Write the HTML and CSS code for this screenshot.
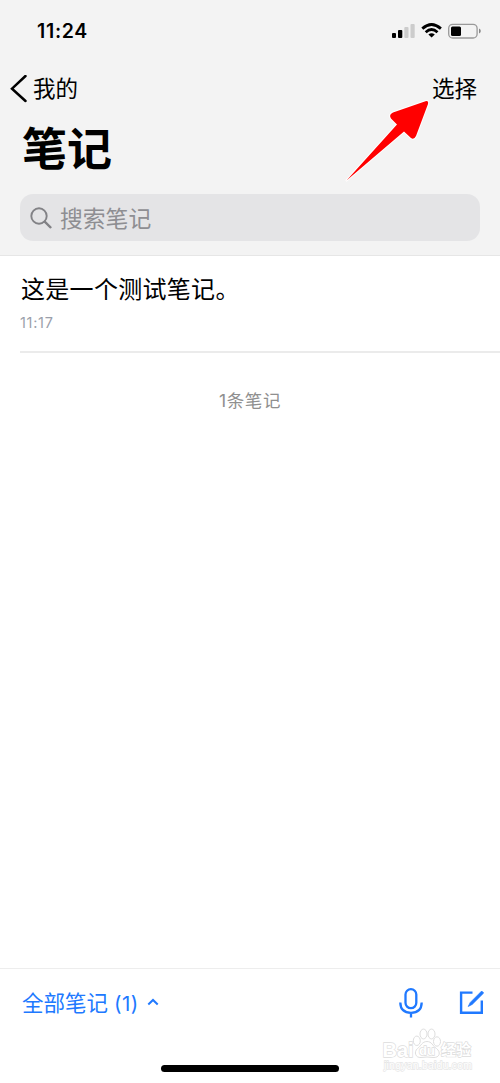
FILE: index.html
```html
<!DOCTYPE html>
<html lang="zh-CN">
<head>
<meta charset="utf-8">
<title>笔记</title>
<link rel="stylesheet" href="styles.css">
</head>
<body>
<div class="screen">
  <header class="header">
    <div class="status">
      <span class="clock">11:24</span>
      <svg class="status-icons" width="90" height="18" viewBox="0 0 90 18">
        <rect x="1" y="11" width="4" height="5" rx="1"/>
        <rect x="7" y="8" width="4.3" height="8" rx="1"/>
        <rect x="13.3" y="5" width="4.2" height="11" rx="1" fill="#ccc"/>
        <rect x="19.5" y="2" width="4.2" height="14" rx="1" fill="#ccc"/>
        <g fill="none" stroke="#000" stroke-width="2.8">
          <path d="M31.3 6.6Q40.500 -1.600 49.900 6.600"/>
          <path d="M34.700 10.200Q40.500 4.800 46.500 10.200"/>
        </g>
        <path d="M37.400 12.400Q40.600 9.900 43.800 12.400L40.600 15.600Z"/>
        <rect x="57.700" y="2.300" width="28.400" height="13.700" rx="4" fill="none" stroke="#999" stroke-width="1.300"/>
        <rect x="60" y="4.500" width="10" height="9.500" rx="1.500"/>
        <path d="M88 6.500Q89.800 7.200 89.800 9T88 11.500Z" fill="#888"/>
      </svg>
    </div>
    <nav class="nav">
      <span class="back">
        <svg width="17" height="28" viewBox="0 0 17 28"><path d="M15.500 1L2 13.700L15.500 26" fill="none" stroke="#000" stroke-width="2.500" stroke-linecap="round"/></svg>
        <span>我的</span>
      </span>
      <span class="select">选择</span>
    </nav>
    <h1 class="title">笔记</h1>
    <div class="search">
      <svg width="22" height="22" viewBox="0 0 22 22"><g fill="none" stroke="#828286" stroke-width="1.900" stroke-linecap="round"><circle cx="9" cy="9" r="7.700"/><path d="M14.700 14.700L20.500 20.300" stroke-width="2.300"/></g></svg>
      <span>搜索笔记</span>
    </div>
  </header>
  <main class="list">
    <article class="note">
      <div class="note-text">这是一个测试笔记。</div>
      <div class="note-time">11:17</div>
    </article>
    <div class="count">1条笔记</div>
  </main>
  <footer class="footer">
    <span class="folder">全部笔记 <span class="folder-count">(1)</span></span>
    <svg class="caret" width="12" height="8" viewBox="0 0 12 8"><path d="M1.300 6.500L6 2L10.700 6.500" fill="none" stroke="#2079ff" stroke-width="2"/></svg>
    <svg class="mic" width="24" height="30" viewBox="0 0 24 30"><g fill="none" stroke="#2079ff" stroke-width="2.300"><rect x="6.500" y="1.200" width="10.800" height="19" rx="5.400"/><path d="M1.300 14.500Q1.500 24.800 12 24.800T22.700 14.500M12 25V29.500"/></g></svg>
    <svg class="compose" width="26" height="26" viewBox="0 0 26 26"><path d="M13.500 3.600H2.100V23.700H22.800V11.500" fill="none" stroke="#2079ff" stroke-width="2.400"/><path d="M9.200 17.500L11.300 13.400L22.700 2L24.700 4L13.200 15.400Z" fill="#2079ff" stroke="#2079ff" stroke-width=".7"/></svg>
  </footer>
  <svg class="arrow" width="90" height="94" viewBox="0 0 90 94"><path d="M6.500 90.500L64 41.500L71 48Q74 50 76 46L88 14Q88.800 10.500 85.500 11.200L53 22.500Q48.500 24.500 51 28.500L57 34.500Z" fill="#f00" stroke="#fff" stroke-width="2" paint-order="stroke" stroke-linejoin="round"/></svg>
  <svg class="watermark" width="105" height="55" viewBox="0 0 105 55">
    <g fill="#fff" stroke="#dedede" stroke-width="1">
      <ellipse cx="41.800" cy="20.800" rx="3.500" ry="4.700"/>
      <ellipse cx="48.500" cy="14" rx="3.500" ry="4.900"/>
      <ellipse cx="56.500" cy="14" rx="3.500" ry="4.900"/>
      <ellipse cx="62" cy="21.500" rx="3.500" ry="4.700"/>
      <path d="M52 21.500C47 21.500 46 26 42.500 28.500C38.500 32 40.500 38 46 37.500Q52 36.500 58 37.500C65 38 66 32 61.500 28.500C57.500 26 57 21.500 52 21.500Z"/>
    </g>
    <g class="mark-text">
      <text x="7.500" y="36.500" font-size="20">Bai</text>
      <text x="44" y="34.500" font-size="13">du</text>
      <text x="66" y="35" font-size="15">经验</text>
      <text x="9" y="48.500" font-size="10.500" textLength="88" class="mark-url">jingyan.baidu.com</text>
    </g>
  </svg>
  <div class="home"></div>
</div>
</body>
</html>
```
FILE: styles.css
```css
* { box-sizing: border-box; }
body { margin: 0; background: #fff; font-family: "Inter", "Noto Sans CJK SC", sans-serif; color: #000; }
.screen { position: relative; width: 500px; height: 1083px; display: flex; flex-direction: column; overflow: hidden; }
.header { height: 256px; background: #f3f3f3; border-bottom: 1px solid #e6e6e6; display: flex; flex-direction: column; }
.status { height: 62px; padding: 0 19px 0 37px; display: flex; justify-content: space-between; align-items: center; }
.clock { font-size: 19.5px; font-weight: 600; letter-spacing: .7px; }
.nav { height: 50px; padding: 0 23px 0 10px; display: flex; justify-content: space-between; align-items: center; font-family: "Noto Sans CJK SC", sans-serif; font-size: 22.5px; line-height: 30px; }
.back { display: flex; align-items: center; gap: 6px; }
.back svg { margin-top: 3px; }
.title { margin: 0; height: 68px; padding-left: 22px; font-family: "Noto Sans CJK SC", sans-serif; font-size: 45px; line-height: 70px; font-weight: 700; }
.search { margin: 14px 20px 0; height: 47px; border-radius: 13px; background: #e4e4e6; padding: 0 10px; display: flex; align-items: center; gap: 8px; color: #8e8e92; font-family: "Noto Sans CJK SC", sans-serif; font-size: 22.8px; line-height: 46px; }
.list { flex: 1; }
.note { margin-left: 20px; height: 97px; padding-top: 14px; border-bottom: 2px solid #ebebeb; }
.note-text { padding-left: 1px; font-family: "Noto Sans CJK SC", sans-serif; font-size: 24px; letter-spacing: .3px; line-height: 35px; }
.note-time { margin-top: 8px; font-size: 14.5px; line-height: 20px; color: #9b9fab; letter-spacing: .7px; }
.count { margin-top: 35px; text-align: center; font-size: 17.5px; line-height: 26px; letter-spacing: .6px; color: #8f8f8f; }
.footer { height: 115px; border-top: 1px solid #ededed; padding: 19px 15px 0 22px; display: flex; align-items: flex-start; color: #2079ff; }
.folder { font-size: 21.5px; line-height: 30px; }
.folder-count { font-size: 20.5px; letter-spacing: .4px; }
.caret { margin: 10px 0 0 8px; }
.mic { margin: 0 0 0 auto; }
.compose { margin: 1px 0 0 36px; }
.arrow { position: absolute; left: 340px; top: 90px; }
.watermark { position: absolute; left: 375px; top: 1020px; }
.mark-text { font-family: "Liberation Sans", "Noto Sans CJK SC", sans-serif; font-weight: 700; fill: #fff; stroke: #dcdcdc; stroke-width: 1.3px; paint-order: stroke; }
.mark-url { font-weight: 400; stroke: #e6e6e6; }
.home { position: absolute; left: 161px; top: 1065px; width: 178px; height: 7px; border-radius: 4px; background: #000; }
```
